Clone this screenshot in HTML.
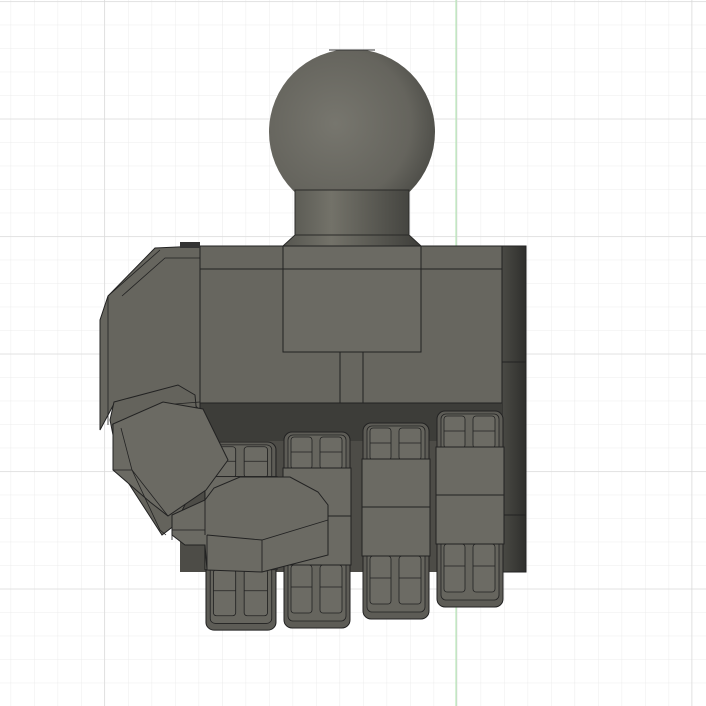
<!DOCTYPE html>
<html><head><style>
html,body{margin:0;padding:0;background:#fff;width:706px;height:706px;overflow:hidden}
</style></head><body>
<svg width="706" height="706" viewBox="0 0 706 706" xmlns="http://www.w3.org/2000/svg">
<defs>
<pattern id="minor" x="10.6" y="1.2" width="23.5" height="23.5" patternUnits="userSpaceOnUse">
<path d="M0 0V23.5M0 0H23.5" stroke="#ececec" stroke-width="1" fill="none"/>
</pattern>
<pattern id="major" x="104" y="1.2" width="117.5" height="117.5" patternUnits="userSpaceOnUse">
<path d="M0 0V117.5M0 0H117.5" stroke="#d8d8d8" stroke-width="1.2" fill="none"/>
</pattern>
<radialGradient id="ball" cx="0.4" cy="0.45" r="0.65">
<stop offset="0" stop-color="#77766e"/><stop offset="0.7" stop-color="#65645d"/><stop offset="1" stop-color="#4a4a45"/>
</radialGradient>
<linearGradient id="neck" x1="0" x2="1">
<stop offset="0" stop-color="#55554f"/><stop offset="0.35" stop-color="#737269"/><stop offset="1" stop-color="#3e3e3a"/>
</linearGradient>
<linearGradient id="rstrip" x1="0" x2="1">
<stop offset="0" stop-color="#4a4a45"/><stop offset="1" stop-color="#2f2f2c"/>
</linearGradient>
<clipPath id="bclip"><rect x="200" y="50" width="300" height="200"/></clipPath>
<g id="finger">
<rect x="0" y="0" width="66" height="196" rx="8" fill="#5d5c56" stroke="#222" stroke-width="1"/>
<rect x="4" y="3" width="58" height="186" rx="5" fill="#66655e" stroke="#222" stroke-width="0.8"/>
<rect x="7" y="5" width="21" height="32" rx="3" fill="#6c6b64" stroke="#222" stroke-width="0.8"/>
<rect x="36" y="5" width="22" height="32" rx="3" fill="#6c6b64" stroke="#222" stroke-width="0.8"/>
<path d="M7 20H28M36 20H58" stroke="#222" stroke-width="0.8"/>
<rect x="7" y="133" width="21" height="48" rx="3" fill="#6c6b64" stroke="#222" stroke-width="0.8"/>
<rect x="36" y="133" width="22" height="48" rx="3" fill="#6c6b64" stroke="#222" stroke-width="0.8"/>
<path d="M7 155H28M36 155H58" stroke="#222" stroke-width="0.8"/>
<rect x="-1" y="36" width="68" height="97" fill="#6b6a63" stroke="#222" stroke-width="1"/>
<path d="M-1 84H67" stroke="#222" stroke-width="1"/>
</g>
</defs>
<rect width="706" height="706" fill="#fff"/>
<rect width="706" height="706" fill="url(#minor)"/>
<rect width="706" height="706" fill="url(#major)"/>
<line x1="456" y1="0" x2="456" y2="706" stroke="#b9e8b9" stroke-width="1.2"/>

<circle cx="352" cy="132" r="83" fill="url(#ball)" clip-path="url(#bclip)"/>
<path d="M329 50H375" stroke="#333" stroke-width="1"/>
<path d="M295 190H409V235L421 246H283L295 235Z" fill="url(#neck)" stroke="#2a2a28" stroke-width="1"/>
<path d="M295 235H409" stroke="#2a2a28"/>

<rect x="180" y="400" width="346" height="172" fill="#4d4c47"/>
<rect x="200" y="246" width="304" height="164" fill="#67665f" stroke="#222" stroke-width="1"/>
<rect x="502" y="246" width="24" height="326" fill="url(#rstrip)" stroke="#222" stroke-width="1"/>
<path d="M502 362H526M502 515H526" stroke="#222"/>
<path d="M200 269H502" stroke="#222"/>
<rect x="283" y="246" width="138" height="106" fill="#6b6a63" stroke="#222" stroke-width="1"/>
<path d="M283 269H421" stroke="#222"/>
<path d="M340 352V418M363 352V418" stroke="#222"/>
<rect x="200" y="403" width="302" height="38" fill="#3d3d39"/>
<path d="M200 403H502" stroke="#222"/>

<path d="M155 248L200 246V410L180 392L115 402L100 430V320L108 296Z" fill="#66655e" stroke="#222" stroke-width="1"/>
<path d="M108 296L160 250M108 296V425M122 296L165 258L200 258" stroke="#222" fill="none" stroke-width="0.8"/>
<path d="M180 242H200V248H180Z" fill="#333"/>

<use href="#finger" x="437" y="411"/>
<use href="#finger" x="363" y="423"/>
<use href="#finger" x="284" y="432"/>
<use href="#finger" x="206" y="442" transform="translate(206 442) scale(1.06 0.96) translate(-206 -442)"/>

<path d="M114 402L178 385L195 395L202 470L175 525L162 535L120 470L110 420Z" fill="#64635c" stroke="#222"/>
<path d="M112 425L162 405L200 402" stroke="#222" fill="none" stroke-width="0.8"/>
<path d="M113 424L163 402L203 409L228 460L206 490L168 516L150 502L113 470Z" fill="#6b6a63" stroke="#222"/>
<path d="M113 470L132 470L168 516M132 470L121 428" stroke="#222" fill="none" stroke-width="0.8"/>
<path d="M132 470L160 530L166 535" stroke="#222" fill="none" stroke-width="0.8"/>
<path d="M172 515L205 500L214 488L240 477L290 477L318 492L328 505V555L262 572L207 570L205 545H185L172 535Z" fill="#6b6a63" stroke="#222"/>
<path d="M207 535L262 540L328 520M262 540V572M207 535V570M205 500V535" stroke="#222" fill="none" stroke-width="0.9"/>
<path d="M172 530H205M172 515V540" stroke="#222" stroke-width="0.8"/>
</svg>
</body></html>
